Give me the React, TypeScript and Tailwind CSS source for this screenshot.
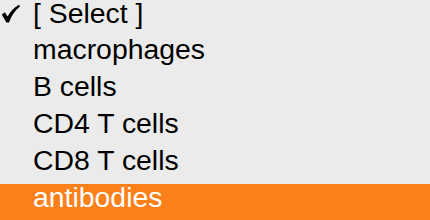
import React from 'react';

const items = ['[ Select ]', 'macrophages', 'B cells', 'CD4 T cells', 'CD8 T cells', 'antibodies'];

function Check() {
  return (
    <svg width="25" height="25" viewBox="0 0 25 25" className="block">
      <path
        d="M1.8 14.4 L4.8 12.2 L7.6 16.6 C10.2 11.6 14.2 7.6 19 4.8 L20 6.4 C15.4 10 11.4 15.2 9 22.4 L6.4 22.4 Z"
        fill="#000"
      />
    </svg>
  );
}

export default function App() {
  const selected = 0;
  const highlighted = 5;

  return (
    <div className="w-[430px] h-[220px] overflow-hidden bg-[#ebebeb] font-['Liberation_Sans',Arial,sans-serif]">
      {items.map((item, i) => (
        <div
          key={item}
          className={`flex items-start text-[28.4px] leading-[27px] ${
            i === 0 ? 'h-[36px] pb-[9px]' : 'h-[37px] pb-[10px]'
          } ${i === highlighted ? 'bg-[#fb801a] text-white' : 'text-black'}`}
        >
          <span className="w-[33px] shrink-0">{i === selected ? <Check /> : null}</span>
          <span>{item}</span>
        </div>
      ))}
    </div>
  );
}
